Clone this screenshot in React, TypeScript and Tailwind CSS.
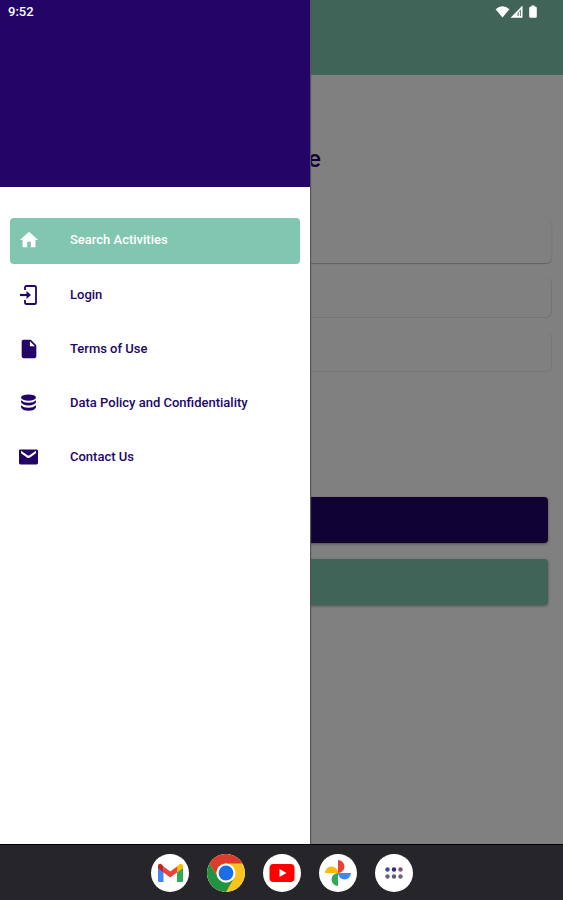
import type { ReactNode } from 'react'
import { MdHome, MdInsertDriveFile } from 'react-icons/md'

interface MenuItem {
  label: string
  icon: ReactNode
  active?: boolean
}

const LoginIcon = () => (
  <svg viewBox="0 0 20 20" className="size-5" fill="none" stroke="currentColor" strokeWidth="1.8">
    <path d="M6 5V2.6Q6 1 7.6 1H15.4Q17 1 17 2.6V17.4Q17 19 15.4 19H7.6Q6 19 6 17.4V15" />
    <path d="M1 10H9" strokeWidth="2.2" />
    <path d="M7.5 6L12 10L7.5 14Z" fill="currentColor" stroke="none" />
  </svg>
)

const DatabaseIcon = () => (
  <svg viewBox="0 0 20 20" className="size-5" fill="currentColor">
    <ellipse cx="9.5" cy="4.6" rx="7.5" ry="3.2" />
    <path d="M2 7.3Q4.6 9.8 9.5 9.8T17 7.3V9.3Q15.6 12.4 9.5 12.4T2 9.3Z" />
    <path d="M2 12.2Q4.6 14.7 9.5 14.7T17 12.2V14.2Q15.6 17.7 9.5 17.7T2 14.2Z" />
  </svg>
)

const MailIcon = () => (
  <svg viewBox="0 0 20 20" className="size-5" fill="currentColor">
    <path fillRule="evenodd" d="M1.4 2.4H17.6Q19 2.4 19 3.8V16Q19 17.4 17.6 17.4H1.4Q0 17.4 0 16V3.8Q0 2.4 1.4 2.4ZM2 3.8V6.2L8 10.6Q9.5 11.6 11 10.6L17 6.2V3.8L10.5 8.2Q9.5 8.8 8.5 8.2Z" />
  </svg>
)

const menu: MenuItem[] = [
  { label: 'Search Activities', icon: <MdHome size={22} />, active: true },
  { label: 'Login', icon: <LoginIcon /> },
  { label: 'Terms of Use', icon: <MdInsertDriveFile size={22} /> },
  { label: 'Data Policy and Confidentiality', icon: <DatabaseIcon /> },
  { label: 'Contact Us', icon: <MailIcon /> },
]

const GmailLogo = () => (
  <svg viewBox="0 0 38 38" className="size-full">
    <path d="M7 12V26.5Q7 28 8.5 28H12.5V16Z" fill="#4285f4" />
    <path d="M26 16V28H30.5Q32 28 32 26.5V12Z" fill="#34a853" />
    <path d="M26 12.5V18.5L32 14V12Q32 9.8 29.8 9.8Q28.8 9.8 28 10.8Z" fill="#fbbc04" />
    <path d="M12.5 18.5V12.4L19.3 17.6L26 12.4V18.5L19.3 23.5Z" fill="#ea4335" />
    <path d="M12.5 12.5V18.5L7 14V12Q7 9.8 9.2 9.8Q10 9.8 11 10.8Z" fill="#c5221f" />
  </svg>
)

const ChromeLogo = () => (
  <svg viewBox="0 0 38 38" className="size-full">
    <circle cx="19" cy="19" r="19" fill="#fcc31e" />
    <path d="M2.5 9.5A19 19 0 0 1 35.5 9.5H19A9.5 9.5 0 0 0 10.8 23.8Z" fill="#dc3b2d" />
    <path d="M2.5 9.5A19 19 0 0 0 19 38L27.2 23.8A9.5 9.5 0 0 1 10.8 23.8Z" fill="#229342" />
    <circle cx="19" cy="19" r="9.5" fill="#fff" />
    <circle cx="19" cy="19" r="7.4" fill="#1a6fe8" />
  </svg>
)

const YoutubeLogo = () => (
  <svg viewBox="0 0 38 38" className="size-full">
    <rect x="6.5" y="10" width="25" height="18" rx="4" fill="#f00" />
    <path d="M16.5 15V23L23.5 19Z" fill="#fff" />
  </svg>
)

const PhotosLogo = () => (
  <svg viewBox="0 0 38 38" className="size-full">
    <path d="M19 6A6.5 6.5 0 0 1 19 19Z" fill="#ea4335" />
    <path d="M32 19A6.5 6.5 0 0 1 19 19Z" fill="#4285f4" />
    <path d="M19 32A6.5 6.5 0 0 1 19 19Z" fill="#34a853" />
    <path d="M6 19A6.5 6.5 0 0 1 19 19Z" fill="#fbbc04" />
  </svg>
)

const AppsLogo = () => (
  <svg viewBox="0 0 38 38" className="size-full">
    <circle cx="12.5" cy="15.5" r="2.2" fill="#3b4a9c" />
    <circle cx="19" cy="15.5" r="2.2" fill="#2b2a8c" />
    <circle cx="25.5" cy="15.5" r="2.2" fill="#855078" />
    <circle cx="12.5" cy="22.5" r="2.2" fill="#66657c" />
    <circle cx="19" cy="22.5" r="2.2" fill="#5c5b78" />
    <circle cx="25.5" cy="22.5" r="2.2" fill="#66657c" />
  </svg>
)

const dock = [
  { name: 'Gmail', logo: <GmailLogo /> },
  { name: 'Chrome', logo: <ChromeLogo /> },
  { name: 'YouTube', logo: <YoutubeLogo /> },
  { name: 'Photos', logo: <PhotosLogo /> },
  { name: 'All apps', logo: <AppsLogo /> },
]

function StatusBar() {
  return (
    <div className="absolute inset-x-0 top-0 z-20 flex h-6 items-center justify-between pl-2 pr-6 text-white">
      <span className="text-[13px] leading-4 font-medium">9:52</span>
      <svg viewBox="0 0 44 14" className="h-3.5 w-11" fill="currentColor">
        <path d="M.6 4.2Q7.5-1.8 14.4 4.2L7.5 12.6Z" />
        <path fillRule="evenodd" d="M27.5 .6V12.8H15.5ZM25.8 4.6V11H22.6V7.8Z" />
        <path d="M23.6 7.4L25 6V11H23.6Z" />
        <path d="M36.3 .6H39.7V1.8H40.5Q41.8 1.8 41.8 3V11.6Q41.8 12.8 40.5 12.8H35.5Q34.2 12.8 34.2 11.6V3Q34.2 1.8 35.5 1.8H36.3Z" />
      </svg>
    </div>
  )
}

/* Search page, dimmed while the drawer is open */
function SearchPage() {
  return (
    <main className="flex-1 bg-[#808080]">
      <header className="h-[75px] bg-[#406457]" />
      <h1 className="pt-[70px] pl-[308px] text-2xl leading-7 font-medium text-[#110234]">e</h1>
      <form className="flex flex-col">
        <div className="mt-[46px] flex flex-col gap-3.5 px-[11px]">
          <select
            aria-label="Activity"
            className="h-11 w-full appearance-none rounded-md border-r border-[#7a7a7a] shadow-[0_1px_1px_#606060]"
          />
          <input
            type="text"
            aria-label="Location"
            className="h-[41px] w-full rounded-md border-r border-b border-[#747474]"
          />
          <input
            type="text"
            aria-label="Date"
            className="h-10 w-full rounded-md border-r border-b border-[#767676]"
          />
        </div>
        <div className="mt-[125px] flex flex-col gap-4 px-[15px]">
          <button
            type="submit"
            aria-label="Search"
            className="h-[46px] rounded bg-[#110234] shadow-[0_1px_3px_#505050]"
          />
          <button
            type="button"
            aria-label="Show map"
            className="h-[46px] rounded bg-[#406457] shadow-[0_1px_3px_#505050]"
          />
        </div>
      </form>
    </main>
  )
}

function Drawer() {
  return (
    <aside className="absolute inset-y-0 left-0 z-10 w-[310px] bg-white shadow-[1px_0_1px_#555555]">
      <div className="h-[187px] bg-[#230568]" />
      <nav className="flex flex-col gap-2 px-2.5 pt-[31px]">
        {menu.map(item => (
          <a
            key={item.label}
            href="#"
            className={
              item.active
                ? 'flex h-[46px] items-center gap-[30px] rounded bg-[#81c6b0] px-2 pb-0.5 text-white'
                : 'flex h-[46px] items-center gap-[30px] rounded px-2 text-[#230568]'
            }
          >
            <span className="flex w-[22px] shrink-0 justify-center">{item.icon}</span>
            <span className="text-[13px] leading-4 font-medium">{item.label}</span>
          </a>
        ))}
      </nav>
    </aside>
  )
}

export default function App() {
  return (
    <div className="flex min-h-screen flex-col font-[Roboto,sans-serif]">
      <div className="relative flex flex-1 flex-col">
        <StatusBar />
        <SearchPage />
        <Drawer />
      </div>
      <footer className="relative z-20 flex h-14 items-center justify-center gap-[18px] border-t border-black bg-[#26262a]">
        {dock.map(app => (
          <button
            key={app.name}
            type="button"
            aria-label={app.name}
            className="size-[38px] overflow-hidden rounded-full bg-white"
          >
            {app.logo}
          </button>
        ))}
      </footer>
    </div>
  )
}
